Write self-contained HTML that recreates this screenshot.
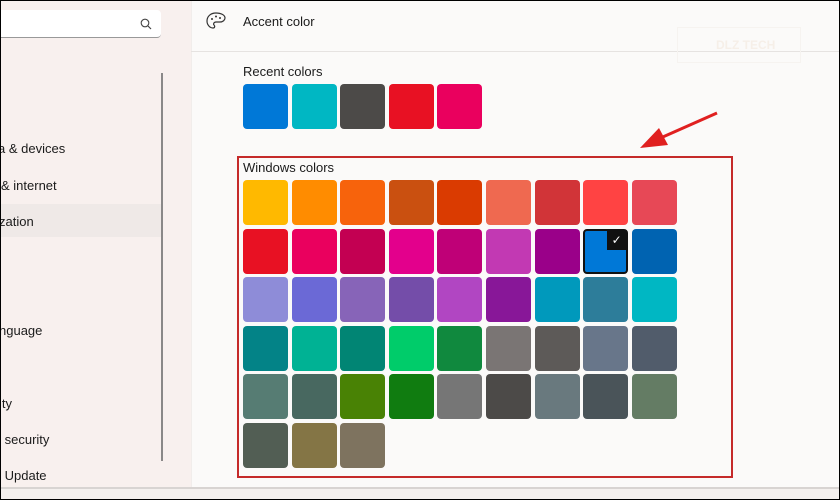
<!DOCTYPE html><html><head><style>
body{margin:0;width:840px;height:500px;overflow:hidden;background:#000;font-family:"Liberation Sans",sans-serif;}
#w{position:absolute;left:1px;top:1px;width:838px;height:498px;background:#fbfaf9;overflow:hidden}
#side{position:absolute;left:0;top:0;width:190px;height:486px;background:#f8f0ee;border-right:1px solid #f1edeb}
.t{position:absolute;font-size:13px;color:#1b1b1b;white-space:nowrap}
.sw{position:absolute;width:45px;height:45px;border-radius:4px}
</style></head><body><div id="w">
<div id="side">
<div style="position:absolute;left:-5px;top:9px;width:165px;height:27px;background:#fff;border-radius:4px;border-bottom:1px solid #999"></div>
<svg style="position:absolute;left:139px;top:17px" width="12" height="12"><circle cx="5" cy="5" r="3.8" fill="none" stroke="#444" stroke-width="1.1"/><line x1="8" y1="8" x2="11" y2="11" stroke="#444" stroke-width="1.2"/></svg>
<div style="position:absolute;left:0;top:203px;width:160px;height:33px;background:#efe9e7"></div>
<div style="position:absolute;left:160px;top:72px;width:2px;height:388px;background:#8a8888"></div>
<div class="t" style="left:-3px;top:140px">a &amp; devices</div>
<div class="t" style="left:0;top:177px">&amp; internet</div>
<div class="t" style="left:-2px;top:213px">zation</div>
<div class="t" style="left:-2px;top:322px">nguage</div>
<div class="t" style="left:-2px;top:395px">ity</div>
<div class="t" style="left:0;top:431px">&nbsp;security</div>
<div class="t" style="left:0;top:467px">&nbsp;Update</div>
</div>
<div style="position:absolute;left:190px;top:50px;width:648px;height:1px;background:#e6e3e1"></div>
<svg style="position:absolute;left:204px;top:10px" width="22" height="20" viewBox="0 0 22 20"><path d="M11 2C5 2 2 6 2 10c0 4 3 7 6 7 2 0 2-2 1-3-1-1 0-3 2-3h4c3 0 5-2 5-4 0-3-4-5-9-5z" fill="none" stroke="#333" stroke-width="1.2"/><circle cx="7" cy="8" r="1" fill="#333"/><circle cx="11" cy="5.5" r="1" fill="#333"/><circle cx="15" cy="7" r="1" fill="#333"/></svg>
<div class="t" style="left:242px;top:13px">Accent color</div>
<div class="t" style="left:242px;top:63px">Recent colors</div>
<div style="position:absolute;left:676px;top:26px;width:122px;height:34px;border:1px solid #f6f3f0;color:#f6efe8;font-weight:bold;font-size:12px;line-height:34px;text-indent:38px">DLZ TECH</div>
<div style="position:absolute;left:236px;top:155px;width:492px;height:318px;border:2.5px solid #c52a2a"></div>
<div class="t" style="left:242px;top:159px">Windows colors</div>
<svg style="position:absolute;left:630px;top:105px" width="95" height="45"><line x1="86" y1="7" x2="25" y2="34" stroke="#e02020" stroke-width="3"/><polygon points="9,42 28,22 37,39" fill="#e02020"/></svg>
<div id="g"></div>
<div style="position:absolute;left:0;top:486px;width:838px;height:2px;background:#d8d4d2"></div>
<div style="position:absolute;left:0;top:488px;width:838px;height:10px;background:#f4f0ee"></div>
</div>
<script>
var rc=["#0078d7","#00b7c3","#4c4a48","#e81123","#ea005e"];
var c=[["#ffb900","#ff8c00","#f7630c","#ca5010","#da3b01","#ef6950","#d13438","#ff4343","#e74856"],
["#e81123","#ea005e","#c30052","#e3008c","#bf0077","#c239b3","#9a0089","#0078d7","#0063b1"],
["#8e8cd8","#6b69d6","#8764b8","#744da9","#b146c2","#881798","#0099bc","#2d7d9a","#00b7c3"],
["#038387","#00b294","#018574","#00cc6a","#10893e","#7a7574","#5d5a58","#68768a","#515c6b"],
["#567c73","#486860","#498205","#107c10","#767676","#4c4a48","#69797e","#4a5459","#647c64"],
["#525e54","#847545","#7e735f"]];
var w=document.getElementById('w'),h='';
rc.forEach(function(x,i){h+='<div class="sw" style="left:'+(242+i*48.6)+'px;top:83px;background:'+x+'"></div>';});
c.forEach(function(r,j){r.forEach(function(x,i){var s=(j==1&&i==7)?';border:2px solid #111;box-sizing:border-box':'';
h+='<div class="sw" style="left:'+(242+i*48.6)+'px;top:'+(179+j*48.5)+'px;background:'+x+s+'">'+((j==1&&i==7)?'<div style="position:absolute;right:0;top:0;width:19px;height:19px;background:#111;color:#fff;font-size:12px;text-align:center;line-height:18px">&#10003;</div>':'')+'</div>';});});
w.insertAdjacentHTML('beforeend',h);
</script></body></html>
